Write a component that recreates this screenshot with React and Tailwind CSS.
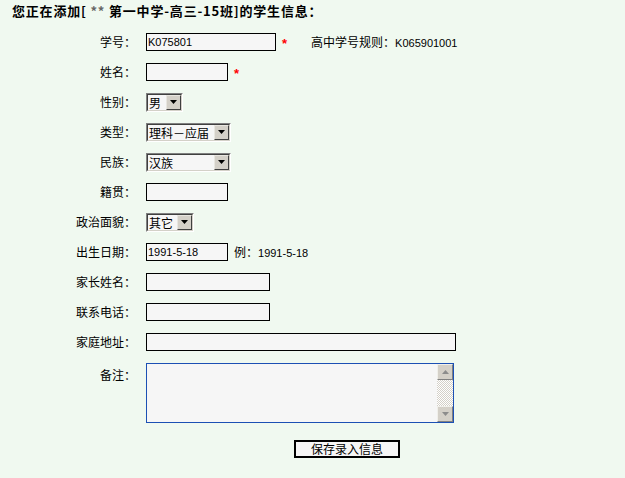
const latin = "font-['Liberation_Sans','Noto_Sans_CJK_SC',sans-serif] text-[11px]"

function Label({ children }) {
  return <div className="w-[136px] shrink-0 text-right text-[12px] leading-[14px]">{children}</div>
}

function Input({ w, value }) {
  return (
    <div className={`h-[18px] ${w} border border-black bg-[#f6f6f6] pl-[1px] flex items-center ${latin} leading-[14px]`}>
      {value}
    </div>
  )
}

function Star() {
  return <span className="ml-[6px] text-[13px] font-bold leading-[14px] text-[#ff0000] font-['Liberation_Sans',sans-serif] translate-y-[2px]">*</span>
}

function Select({ w, value }) {
  return (
    <div className={`h-[19px] ${w} border border-t-[#808080] border-l-[#808080] border-b-white border-r-white`}>
      <div className="flex h-full w-full border border-t-[#404040] border-l-[#404040] border-b-[#d4d0c8] border-r-[#d4d0c8] bg-[#f6f6f6]">
        <div className="flex-1 pl-[1px] text-[12px] leading-[15px] whitespace-nowrap overflow-hidden">{value}</div>
        <div className="w-[15px] h-full border border-t-[#e8e6e0] border-l-[#e8e6e0] border-b-[#404040] border-r-[#404040] bg-[#d4d0c8] flex items-center justify-center">
          <svg width="7" height="4" viewBox="0 0 7 4"><path d="M0 0H7L3.5 4Z" fill="#000" /></svg>
        </div>
      </div>
    </div>
  )
}

function ScrollBtn({ up }) {
  return (
    <div className="h-[16px] w-[16px] border border-t-[#f0efea] border-l-[#f0efea] border-b-[#808080] border-r-[#808080] bg-[#d4d0c8] flex items-center justify-center">
      <svg width="7" height="4" viewBox="0 0 7 4">
        <path d={up ? 'M0 4H7L3.5 0Z' : 'M0 0H7L3.5 4Z'} fill="#8c8c8c" />
      </svg>
    </div>
  )
}

function Row({ label, children }) {
  return (
    <div className="flex h-[30px] items-center">
      <Label>{label}</Label>
      <div className="ml-[10px] flex items-center">{children}</div>
    </div>
  )
}

export default function App() {
  return (
    <div className="w-[625px] h-[478px] bg-[#f0f9f0] text-black font-['Noto_Sans_CJK_SC','Noto_Sans',sans-serif]">
      {/* 标题 */}
      <div className="h-[27px] pl-[12px] pt-[3px] text-[13px] font-bold leading-[16px] tracking-[0.8px]">
        您正在添加[ <span className="text-[#666]">**</span> 第一中学-高三-15班]的学生信息：
      </div>

      <Row label="学号：">
        <Input w="w-[130px]" value="K075801" />
        <Star />
        <span className="ml-[24px] text-[12px] leading-[14px]">
          高中学号规则：<span className={latin}>K065901001</span>
        </span>
      </Row>
      <Row label="姓名：">
        <Input w="w-[82px]" />
        <Star />
      </Row>
      <Row label="性别：">
        <Select w="w-[37px]" value="男" />
      </Row>
      <Row label="类型：">
        <Select w="w-[85px]" value="理科－应届" />
      </Row>
      <Row label="民族：">
        <Select w="w-[85px]" value="汉族" />
      </Row>
      <Row label="籍贯：">
        <Input w="w-[82px]" />
      </Row>
      <Row label="政治面貌：">
        <Select w="w-[48px]" value="其它" />
      </Row>
      <Row label="出生日期：">
        <Input w="w-[82px]" value="1991-5-18" />
        <span className="ml-[6px] text-[12px] leading-[14px]">
          例：<span className={latin}>1991-5-18</span>
        </span>
      </Row>
      <Row label="家长姓名：">
        <Input w="w-[124px]" />
      </Row>
      <Row label="联系电话：">
        <Input w="w-[124px]" />
      </Row>
      <Row label="家庭地址：">
        <Input w="w-[310px]" />
      </Row>

      {/* 备注 */}
      <div className="flex pt-[6px]">
        <div className="pt-[5px]">
          <Label>备注：</Label>
        </div>
        <div className="ml-[10px] flex h-[60px] w-[308px] border border-[#1c50b4] bg-[#f6f6f6]">
          <div className="flex-1" />
          <div className="flex w-[16px] flex-col">
            <ScrollBtn up />
            <div className="flex-1 bg-[repeating-conic-gradient(#d4d0c8_0_25%,#ffffff_0_50%)] bg-[length:2px_2px]" />
            <ScrollBtn />
          </div>
        </div>
      </div>

      <div className="pl-[294px] pt-[17px]">
        <div className="flex h-[18px] w-[106px] items-center justify-center border-2 border-black bg-[#f6f6f6] text-[12px] leading-[14px]">
          保存录入信息
        </div>
      </div>
    </div>
  )
}
